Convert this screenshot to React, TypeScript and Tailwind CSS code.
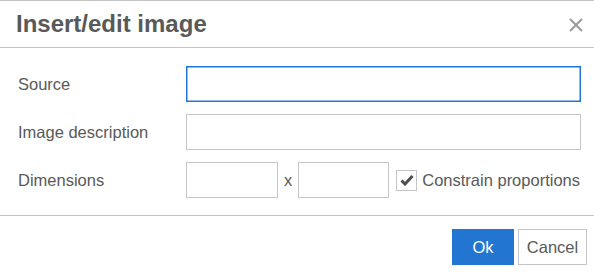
const LABEL = "w-[186px] shrink-0 pl-[18px] text-[16.5px] text-[#595959]";
const INPUT = "h-9 border border-[#c5c5c5] bg-white outline-none";

export default function App() {
  return (
    <div className="w-[594px] h-[274px] bg-white font-['Liberation_Sans',Arial,sans-serif] text-[#595959] overflow-hidden">
      {/* Header */}
      <div className="flex h-[48px] items-center justify-between border-y border-[#c5c5c5] pl-4 pr-[11px]">
        <h1 className="text-[24px] font-bold leading-none text-[#595959] -mt-[1px]">Insert/edit image</h1>
        <svg width="14" height="14" viewBox="0 0 14 14" className="mt-[1px]">
          <path d="M1 1L13 13M13 1L1 13" stroke="#9a9a9a" strokeWidth="2" />
        </svg>
      </div>

      {/* Body */}
      <div className="flex flex-col gap-3 pt-[18px] pb-[17px] pr-[13px]">
        <div className="flex items-center">
          <label className={LABEL}>Source</label>
          <div className="h-9 flex-1 border border-[#2276d2] shadow-[inset_0_0_0_0.5px_#2276d2]" />
        </div>
        <div className="flex items-center">
          <label className={LABEL}>Image description</label>
          <div className={`${INPUT} flex-1`} />
        </div>
        <div className="flex items-center">
          <label className={LABEL}>Dimensions</label>
          <div className={`${INPUT} w-[92px]`} />
          <span className="mx-[6px] text-[16.5px]">x</span>
          <div className={`${INPUT} w-[91px]`} />
          <div className="ml-[7px] flex h-[21px] w-[21px] items-center justify-center border border-[#c5c5c5]">
            <svg width="14" height="12" viewBox="0 0 14 12">
              <path d="M1.5 6.5L5 10L12.5 2" fill="none" stroke="#4d4d4d" strokeWidth="3" />
            </svg>
          </div>
          <span className="ml-[5px] text-[16.5px] text-[#595959]">Constrain proportions</span>
        </div>
      </div>

      {/* Footer */}
      <div className="flex justify-end gap-1 border-t border-[#c5c5c5] pt-[13px] pr-[7px]">
        <button className="h-9 w-[62px] bg-[#2276d2] text-[16.5px] text-white">Ok</button>
        <button className="h-9 w-[69px] border border-[#c5c5c5] bg-white text-[16.5px] text-[#595959]">Cancel</button>
      </div>
    </div>
  );
}
